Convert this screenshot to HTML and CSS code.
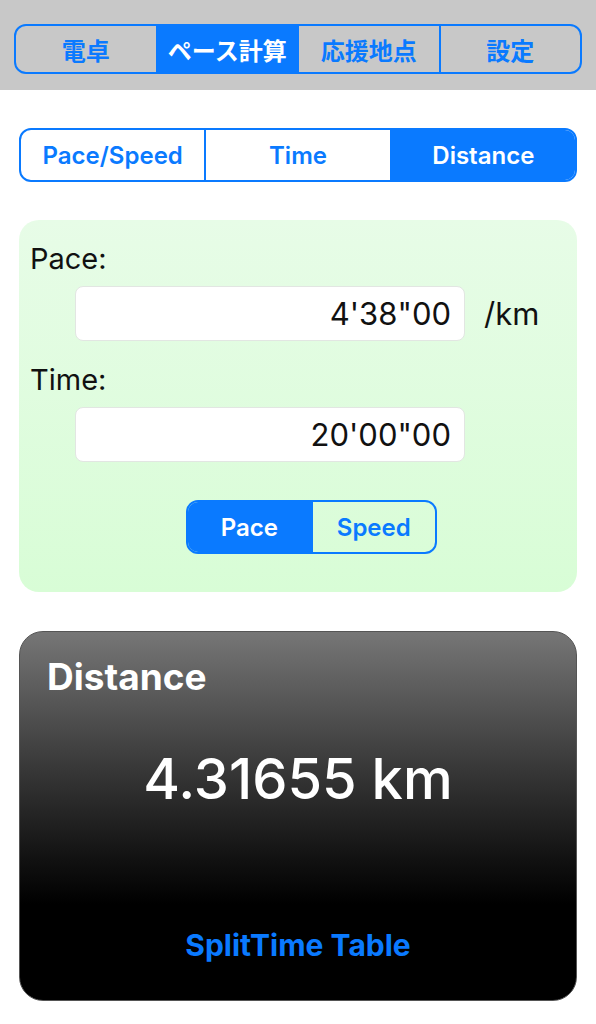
FILE: index.html
```html
<!DOCTYPE html>
<html>
<head>
<meta charset="utf-8" />
<title>ペース計算</title>
<link rel="stylesheet" href="styles.css">
</head>
<body>
<div class="topbar">
  <div class="seg seg-top">
    <div class="seg-item">電卓</div>
    <div class="seg-item on">ペース計算</div>
    <div class="seg-item">応援地点</div>
    <div class="seg-item">設定</div>
  </div>
</div>

<div class="content">
  <div class="seg seg-mode">
    <div class="seg-item">Pace/Speed</div>
    <div class="seg-item">Time</div>
    <div class="seg-item on">Distance</div>
  </div>

  <div class="inputs">
    <div class="label">Pace:</div>
    <div class="row">
      <div class="field">4'38"00</div>
      <span class="unit">/km</span>
    </div>
    <div class="label">Time:</div>
    <div class="row">
      <div class="field">20'00"00</div>
    </div>
    <div class="seg seg-kind">
      <div class="seg-item on">Pace</div>
      <div class="seg-item">Speed</div>
    </div>
  </div>

  <div class="result">
    <div class="result-title">Distance</div>
    <div class="result-value">4.31655 km</div>
    <div class="result-link">SplitTime Table</div>
  </div>
</div>
</body>
</html>
```

FILE: styles.css
```css
* {
  box-sizing: border-box;
}
html, body {
  margin: 0;
  background: #fff;
  font-family: Inter, "Noto Sans CJK JP", sans-serif;
}
.topbar {
  background: #c8c8c8;
  height: 90px;
  padding: 24px 14px 0 14px;
}
.seg {
  display: flex;
  border: 2px solid #0a7aff;
  border-radius: 12px;
  overflow: hidden;
  color: #0a7aff;
  font-weight: 600;
}
.seg-item {
  flex: 1;
  display: flex;
  align-items: center;
  justify-content: center;
  border-left: 2px solid #0a7aff;
}
.seg-item:first-child {
  border-left: none;
}
.seg-item.on {
  background: #0a7aff;
  color: #fff;
}
.seg-top {
  height: 50px;
  font-family: "Noto Sans CJK JP", sans-serif;
  font-weight: 700;
  font-size: 24px;
}
.content {
  padding: 0 19px;
}
.seg-mode {
  margin-top: 38px;
  height: 54px;
  font-size: 24px;
  background: #fff;
}
.inputs {
  margin-top: 38px;
  height: 372px;
  border-radius: 20px;
  background: linear-gradient(#e7fce7, #d8fdd6);
  padding: 24px 11px 0 11px;
}
.label {
  font-size: 29px;
  line-height: 30px;
  color: #111;
}
.row {
  display: flex;
  align-items: center;
  margin: 12px 0 24px 45px;
}
.row:last-of-type {
  margin-bottom: 0;
}
.field {
  width: 390px;
  height: 55px;
  background: #fff;
  border: 1px solid #e2e6e2;
  border-radius: 8px;
  font-size: 31px;
  text-align: right;
  line-height: 53px;
  padding-right: 13px;
  color: #111;
}
.unit {
  margin-left: 19px;
  font-size: 31px;
  color: #111;
}
.seg-kind {
  width: 251px;
  height: 54px;
  margin: 38px 0 0 156px;
  font-size: 24px;
}
.result {
  margin-top: 39px;
  height: 370px;
  border-radius: 24px;
  border: 1px solid #555;
  background: linear-gradient(#767676 0%, #333 40%, #111 62%, #000 74%);
  padding: 27px 27px 0 27px;
  color: #fff;
  display: flex;
  flex-direction: column;
}
.result-title {
  font-size: 37px;
  font-weight: 700;
  line-height: 36px;
}
.result-value {
  margin-top: 54px;
  text-align: center;
  font-size: 56px;
  font-weight: 500;
  line-height: 60px;
}
.result-link {
  margin-top: 118px;
  text-align: center;
  font-size: 30px;
  font-weight: 700;
  line-height: 36px;
  color: #0a7aff;
}
```
